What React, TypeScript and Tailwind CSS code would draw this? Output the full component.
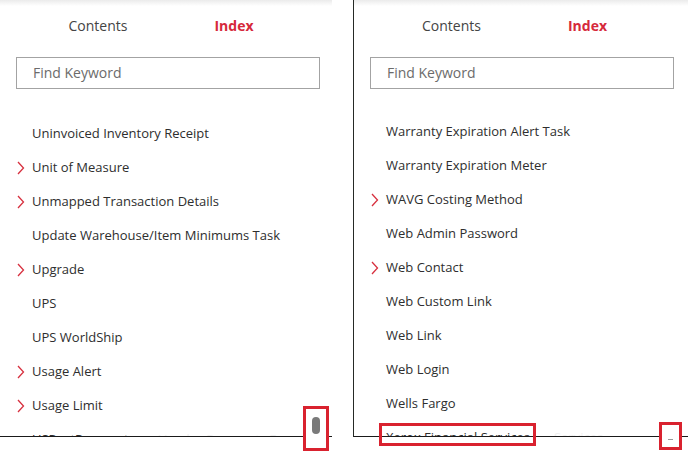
import React from "react";

type Entry = { label: string; sub?: boolean };

const LEFT: Entry[] = [
  { label: "Uninvoiced Inventory Receipt" },
  { label: "Unit of Measure", sub: true },
  { label: "Unmapped Transaction Details", sub: true },
  { label: "Update Warehouse/Item Minimums Task" },
  { label: "Upgrade", sub: true },
  { label: "UPS" },
  { label: "UPS WorldShip" },
  { label: "Usage Alert", sub: true },
  { label: "Usage Limit", sub: true },
  { label: "USPostPayments" },
];

const RIGHT: Entry[] = [
  { label: "Warranty Expiration Alert Task" },
  { label: "Warranty Expiration Meter" },
  { label: "WAVG Costing Method", sub: true },
  { label: "Web Admin Password" },
  { label: "Web Contact", sub: true },
  { label: "Web Custom Link" },
  { label: "Web Link" },
  { label: "Web Login" },
  { label: "Wells Fargo" },
  { label: "Xerox Financial Services" },
];

function Chevron() {
  return (
    <svg className="h-[14px] w-[8px] shrink-0" viewBox="0 0 8 14" fill="none">
      <path d="M1 1l5.5 6L1 13" stroke="#d7303f" strokeWidth={1.3} />
    </svg>
  );
}

function IndexPanel({ items, listTop, ghost, bordered }: { items: Entry[]; listTop: string; ghost: string; bordered?: boolean }) {
  return (
    <div
      className={`relative h-[437px] overflow-hidden border-b border-[#1a1a1a] bg-white ${
        bordered ? "w-[335px] border-l border-l-[#262a26]" : "w-[332px]"
      }`}
    >
      {/* top shadow */}
      <div className="absolute inset-x-0 top-0 h-[6px] bg-gradient-to-b from-[#ebebeb] to-white" />

      {/* Tabs */}
      <div className={`flex justify-center pt-[16px] text-[14px] leading-[20px] ${bordered ? "-ml-[3px]" : ""}`}>
        <span className="w-[136px] text-center text-[#444]">Contents</span>
        <span className="w-[136px] text-center font-bold text-[#d6293b]">Index</span>
      </div>

      {/* Search */}
      <div className="ml-[16px] mt-[21px] flex h-[32px] w-[304px] items-center border border-[#a3a3a3] px-[16px] pb-[2px] text-[14px] text-[#6b6b6b]">
        Find Keyword
      </div>

      {/* Entries */}
      <div className={listTop}>
        {items.map((it, i) => (
          <div key={it.label} className="flex h-[34px] items-center pl-[17px] text-[13px] text-[#2e2e2e]">
            <span className="flex w-[15px] items-center">{it.sub && <Chevron />}</span>
            <span className="whitespace-nowrap">{it.label}</span>
            {i === items.length - 1 && (
              <span className="ml-[24px] whitespace-nowrap text-[#efefef]">{ghost}</span>
            )}
          </div>
        ))}
      </div>
    </div>
  );
}

export default function App() {
  return (
    <div className="relative h-[455px] w-[688px] overflow-hidden bg-white" style={{ fontFamily: "'Open Sans', 'Liberation Sans', sans-serif" }}>
      <div className="flex gap-[21px]">
        <IndexPanel items={LEFT} listTop="mt-[28px]" ghost="Vendor Payments Export" />
        <IndexPanel items={RIGHT} listTop="mt-[26px]" ghost="Services" bordered />
      </div>

      {/* annotation: scroll thumb */}
      <div className="absolute left-[303px] top-[406px] flex h-[45px] w-[26px] justify-center border-[3px] border-[#d9222f] bg-white">
        <div className="mt-[8px] h-[17px] w-[8px] rounded-full bg-[#7a7a7a]" />
      </div>

      {/* annotation: last entry */}
      <div className="absolute left-[379px] top-[423px] h-[23px] w-[157px] border-[3px] border-[#d9222f]" />

      {/* annotation: collapsed thumb */}
      <div className="absolute left-[659px] top-[422px] flex h-[28px] w-[23px] items-center justify-center border-[3px] border-[#d9222f] bg-white">
        <div className="mt-[6px] h-[1px] w-[5px] bg-[#9a9a9a]" />
      </div>
    </div>
  );
}
